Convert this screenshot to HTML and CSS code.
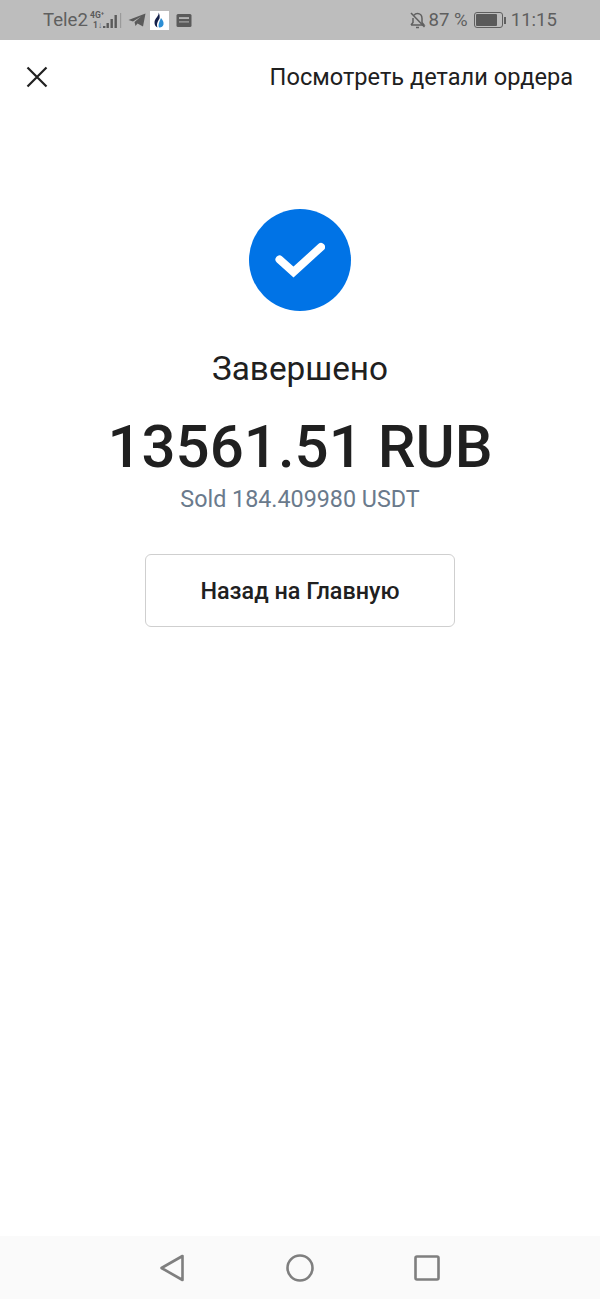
FILE: index.html
```html
<!DOCTYPE html>
<html lang="en">
<head>
    <meta charset="UTF-8">
    <meta name="viewport" content="width=device-width, initial-scale=1.0">
    <title>Завершено</title>
    <link rel="stylesheet" href="styles.css">
</head>
<body>
    <div class="phone">
        <div class="status-bar">
            <div class="status-left">
                <span class="carrier">Tele2</span>
                <svg class="net-icon" width="33" height="20" viewBox="0 0 33 20">
                    <text x="1" y="8" class="net-text">4G⁺</text>
                    <text x="4" y="18" class="net-text">1↓</text>
                    <rect x="14" y="16" width="2.4" height="2" fill="#5a5a5a"/>
                    <rect x="17.5" y="13" width="2.4" height="5" fill="#5a5a5a"/>
                    <rect x="21.5" y="9" width="2.4" height="9" fill="#5a5a5a"/>
                    <rect x="25.5" y="5" width="2.4" height="13" fill="#5a5a5a"/>
                    <rect x="31" y="3" width="1.2" height="15" fill="#9a9a9a"/>
                </svg>
                <svg class="tg-icon" width="18" height="14" viewBox="0 0 18 14">
                    <path d="M0.5 7 L17.5 0.5 L15 13.5 L9.5 10.5 L7.5 13 L6.5 9 L13 3.5 L5 8.5 Z" fill="#5a5a5a"/>
                </svg>
                <div class="app-tile">
                    <svg width="12" height="16" viewBox="0 0 12 16">
                        <path d="M5.5 0.5 C6.5 3.5 2 6 1.5 10 C1.2 13 3 15 4.5 15.5 C3 12 5 9 6.5 6.5 C7 4.5 6.5 2 5.5 0.5 Z" fill="#14204a"/>
                        <path d="M8 6 C9.5 8 11 10 10.5 12.5 C10 14.5 8 15.8 6 15.5 C4.8 13 6.5 9 8 6 Z" fill="#2d8fd5"/>
                    </svg>
                </div>
                <svg class="news-icon" width="16" height="13" viewBox="0 0 16 13">
                    <rect x="0.5" y="0" width="15" height="13" rx="1.5" fill="#5a5a5a"/>
                    <rect x="3" y="3.2" width="10" height="1.7" fill="#bdbdbd"/>
                    <rect x="3" y="7" width="10" height="1.7" fill="#8f8f8f"/>
                </svg>
            </div>
            <div class="status-right">
                <svg width="17" height="18" viewBox="0 0 17 18" fill="none" stroke="#5f5f5f" stroke-width="1.5">
                    <path d="M2 14 H15 L13 11.5 V7.5 C13 4.5 11 2.5 8.5 2.5 C7 2.5 5.8 3.2 5 4.2 M4 7 V11.5 L2 14"/>
                    <path d="M7 16.5 H10"/>
                    <path d="M2 2 L15.5 16"/>
                </svg>
                <span class="battery-pct">87 %</span>
                <div class="battery">
                    <div class="battery-body"><div class="battery-fill"></div></div>
                    <div class="battery-cap"></div>
                </div>
                <span class="clock">11:15</span>
            </div>
        </div>

        <div class="top-bar">
            <svg class="close-icon" width="22" height="22" viewBox="0 0 22 22" fill="none" stroke="#202020" stroke-width="2.2">
                <path d="M1.5 1.5 L20.5 20.5 M20.5 1.5 L1.5 20.5"/>
            </svg>
            <span class="details-link">Посмотреть детали ордера</span>
        </div>

        <div class="content">
            <div class="check-circle">
                <svg width="50" height="40" viewBox="0 0 50 40" fill="none" stroke="#fff" stroke-width="8" stroke-linecap="round" stroke-linejoin="miter">
                    <path d="M4.5 19.5 L18.5 32 L46 7"/>
                </svg>
            </div>
            <div class="status-title">Завершено</div>
            <div class="amount">13561.51 RUB</div>
            <div class="sold">Sold 184.409980 USDT</div>
            <button class="home-btn">Назад на Главную</button>
        </div>

        <div class="nav-bar">
            <svg width="26" height="28" viewBox="0 0 26 28" fill="none" stroke="#7f7f7f" stroke-width="2.6" stroke-linejoin="round">
                <path d="M22.5 2 V26 L1.5 14 Z"/>
            </svg>
            <svg width="28" height="28" viewBox="0 0 28 28" fill="none" stroke="#7f7f7f" stroke-width="2.6">
                <circle cx="14" cy="14" r="12.5"/>
            </svg>
            <svg width="26" height="26" viewBox="0 0 26 26" fill="none" stroke="#7f7f7f" stroke-width="2.6" stroke-linejoin="round">
                <rect x="1.5" y="1.5" width="23" height="23" rx="1.5"/>
            </svg>
        </div>
    </div>
</body>
</html>
```
FILE: styles.css
```css
* {
    box-sizing: border-box;
}
body {
    margin: 0;
    background: #fff;
    font-family: Roboto, "Noto Sans", sans-serif;
    color: #202020;
}
.phone {
    width: 600px;
    height: 1299px;
    display: flex;
    flex-direction: column;
    overflow: hidden;
}
.status-bar {
    height: 40px;
    background: #bdbdbd;
    color: #5f5f5f;
    display: flex;
    justify-content: space-between;
    align-items: center;
    padding: 0 43px;
    font-size: 18.6px;
}
.status-left, .status-right {
    display: flex;
    align-items: center;
}
.net-icon {
    margin-left: 1px;
}
.net-text {
    font-size: 8.5px;
    font-weight: 700;
    fill: #5a5a5a;
}
.tg-icon {
    margin-left: 6px;
}
.app-tile {
    width: 19px;
    height: 19px;
    margin-left: 4px;
    background: #fff;
    display: flex;
    align-items: center;
    justify-content: center;
}
.news-icon {
    margin-left: 7px;
}
.battery-pct {
    margin-left: 3px;
}
.battery {
    display: flex;
    align-items: center;
    margin-left: 6px;
}
.battery-body {
    width: 29px;
    height: 16px;
    border: 1px solid #5f5f5f;
    border-radius: 3px;
    padding: 1px;
}
.battery-fill {
    width: 85%;
    height: 100%;
    background: #5a5a5a;
    border-radius: 1px;
}
.battery-cap {
    width: 2px;
    height: 7px;
    margin-left: 1px;
    background: #5f5f5f;
}
.clock {
    margin-left: 5px;
}
.top-bar {
    height: 74px;
    display: flex;
    justify-content: space-between;
    align-items: center;
    padding: 0 27px 0 26px;
}
.details-link {
    font-size: 23.6px;
}
.content {
    flex: 1;
    display: flex;
    flex-direction: column;
    align-items: center;
    padding-top: 95px;
}
.check-circle {
    width: 102px;
    height: 102px;
    border-radius: 50%;
    background: #0073e6;
    display: flex;
    align-items: center;
    justify-content: center;
}
.status-title {
    margin-top: 38px;
    font-size: 33.3px;
    line-height: 40px;
}
.amount {
    margin-top: 22px;
    font-size: 60px;
    font-weight: 500;
    line-height: 72px;
}
.sold {
    margin-top: 1px;
    font-size: 23.3px;
    line-height: 30px;
    color: #6a7a8c;
}
.home-btn {
    width: 310px;
    height: 73px;
    margin-top: 40px;
    background: #fff;
    border: 1px solid #cfcfcf;
    border-radius: 6px;
    font-family: inherit;
    font-size: 23.4px;
    font-weight: 500;
    color: #202020;
}
.nav-bar {
    height: 63px;
    background: #fafafa;
    display: flex;
    align-items: center;
    justify-content: center;
    gap: 100px;
}
```
